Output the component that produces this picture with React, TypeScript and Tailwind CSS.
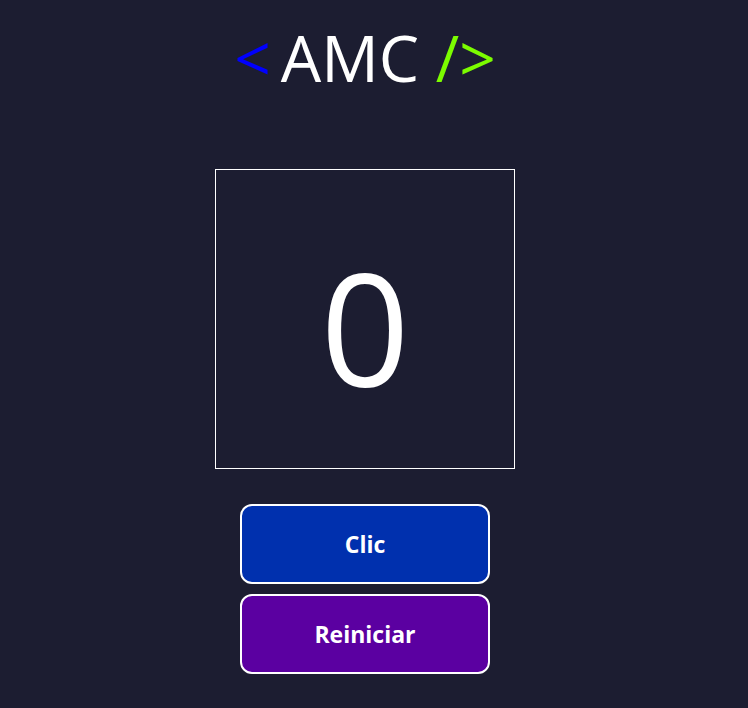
import { useState } from 'react';

export default function App() {
  const [count, setCount] = useState(0);

  return (
    <div
      className="min-h-[708px] w-full bg-[#1c1d31]"
      style={{ fontFamily: '"Open Sans", "Noto Sans", sans-serif' }}
    >
      <div className="w-[730px] flex flex-col items-center pt-[26px]">
        {/* Logo */}
        <h1 className="text-[64px] leading-none text-white font-normal whitespace-pre">
          <span className="text-[#0000ff] mr-[10px]">&lt;</span>AMC <span className="text-[#7cfc00]">/&gt;</span>
        </h1>

        {/* Contador */}
        <div className="mt-[79px] w-[300px] h-[300px] border border-white flex items-center justify-center">
          <span className="text-[156px] leading-none text-white pt-[14px]">{count}</span>
        </div>

        <div className="mt-[35px] flex flex-col gap-[10px]">
          <button
            onClick={() => setCount(count + 1)}
            className="w-[250px] h-[80px] rounded-[12px] border-2 border-white bg-[#0030ae] text-white text-[23px] font-bold"
          >
            Clic
          </button>
          <button
            onClick={() => setCount(0)}
            className="w-[250px] h-[80px] rounded-[12px] border-2 border-white bg-[#5b00a1] text-white text-[23px] font-bold"
          >
            Reiniciar
          </button>
        </div>
      </div>
    </div>
  );
}
